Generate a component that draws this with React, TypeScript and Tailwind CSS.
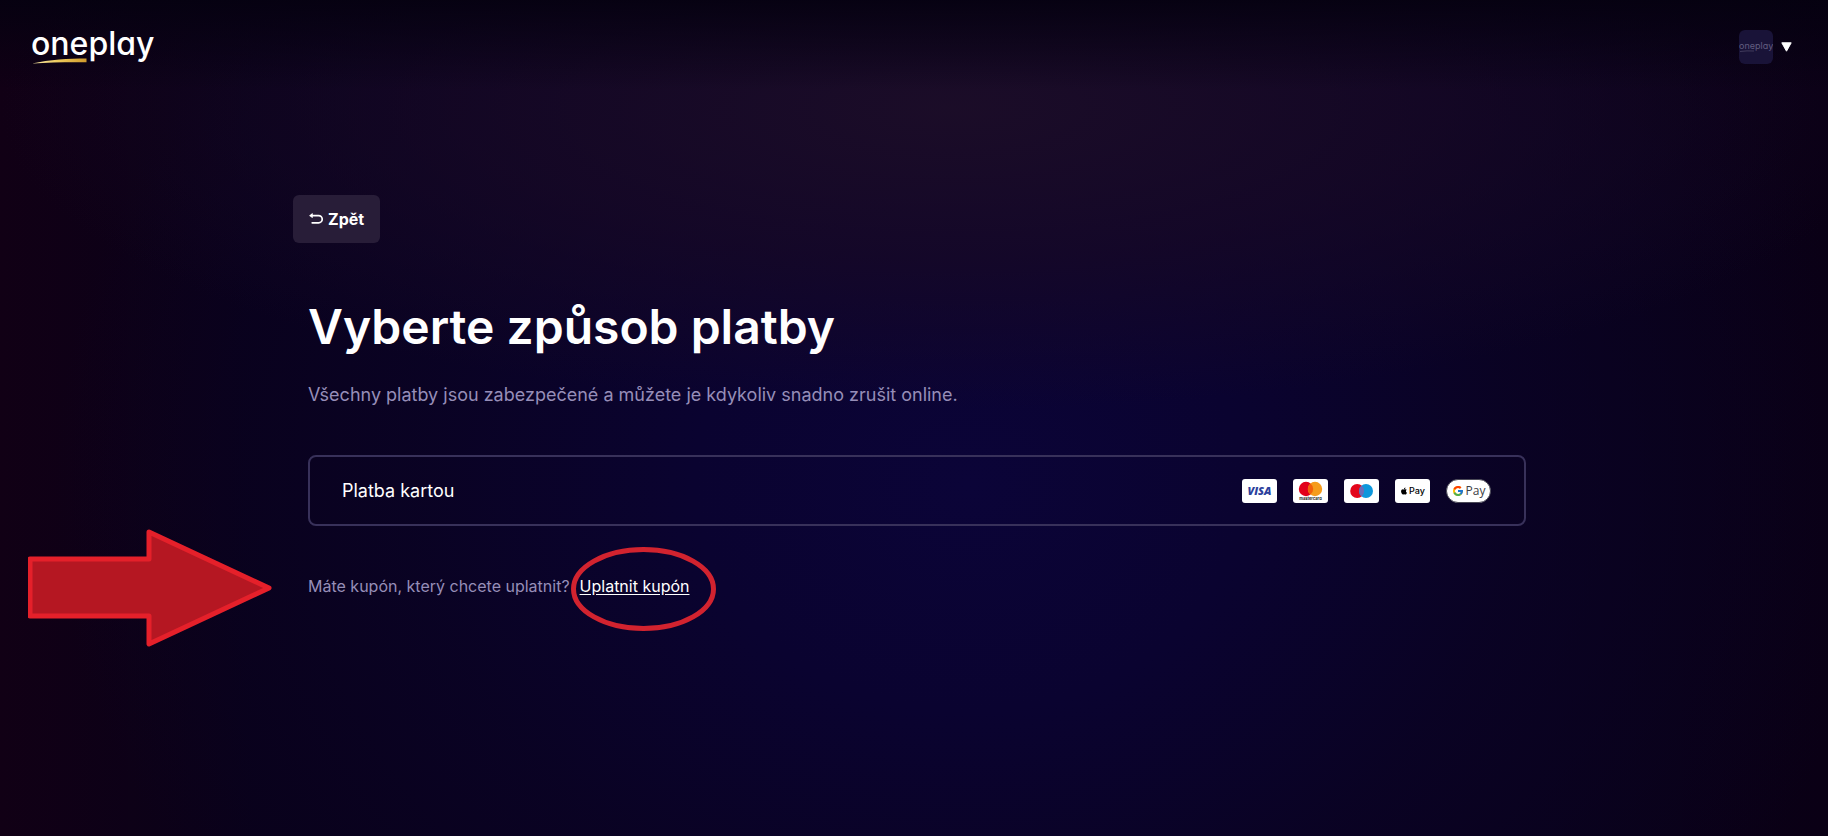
import React from "react";
import { FaApple } from "react-icons/fa";
import { FcGoogle } from "react-icons/fc";

function Logo() {
  return (
    <a href="#" aria-label="oneplay" className="block">
      <svg width="132" height="54" viewBox="0 -10 132 54" aria-hidden="true">
        <defs>
          <linearGradient id="swoosh" x1="0" x2="1" y1="0" y2="0">
            <stop offset="0" stopColor="#f8e9a8" />
            <stop offset="0.5" stopColor="#ecc95a" />
            <stop offset="1" stopColor="#d09a2c" />
          </linearGradient>
        </defs>
        <text
          x="-1"
          y="25"
          fill="#fff"
          fontSize="32"
          fontWeight="500"
          className="font-['Inter',sans-serif] [font-feature-settings:'cv11']"
        >
          oneplay
        </text>
        <path d="M0 33.6C18 29.6 36 28.6 54.5 28.6V32.2C36 32 18 32.2 0 33.6Z" fill="url(#swoosh)" />
      </svg>
    </a>
  );
}

function ProfileMenu() {
  return (
    <button type="button" aria-label="Profil" className="flex items-center gap-2">
      <span className="flex size-[34px] items-center justify-center overflow-hidden rounded-md bg-[#191338]">
        <svg width="34" height="34" viewBox="0 0 34 34" aria-hidden="true">
          <text
            x="0"
            y="19"
            fill="#625d80"
            fontSize="9"
            className="font-['Inter',sans-serif] [font-feature-settings:'cv11']"
          >
            oneplay
          </text>
          <path d="M1 21.5Q8 20.5 15 21" stroke="#524c6c" strokeWidth="0.7" fill="none" />
        </svg>
      </span>
      <svg width="11" height="10" viewBox="0 0 11 10" aria-hidden="true">
        <path d="M0.8 0.8H10.2L5.5 9.2Z" fill="#fff" stroke="#fff" strokeLinejoin="round" />
      </svg>
    </button>
  );
}

function BackIcon() {
  return (
    <svg width="14" height="14" viewBox="0 0 14 14" fill="none" stroke="#fff" strokeWidth="1.7" aria-hidden="true">
      <path d="M1.4 3.6H9.6A3.6 3.6 0 0 1 9.6 10.8H3.2" strokeLinecap="round" />
      <path d="M3.2 1.6L1.2 3.6L3.2 5.6Z" fill="#fff" strokeWidth="1" strokeLinejoin="round" />
    </svg>
  );
}

function Badge({ label, children }: { label: string; children: React.ReactNode }) {
  return (
    <li aria-label={label} className="flex h-6 w-[35px] items-center justify-center overflow-hidden rounded-[3px] bg-white">
      {children}
    </li>
  );
}

function PaymentBadges() {
  return (
    <ul className="flex items-center gap-4">
      <Badge label="Visa">
        <svg width="35" height="24" viewBox="0 0 35 24" aria-hidden="true">
          <text
            x="17.5"
            y="16"
            textAnchor="middle"
            fill="#2c3f9c"
            fontSize="11"
            fontWeight="800"
            fontStyle="italic"
            className="font-['Open_Sans',sans-serif]"
          >
            VISA
          </text>
        </svg>
      </Badge>
      <Badge label="Mastercard">
        <svg width="35" height="24" viewBox="0 0 35 24" aria-hidden="true">
          <circle cx="13" cy="10" r="7.2" fill="#e2001a" />
          <circle cx="22" cy="10" r="7.2" fill="#f59c1c" />
          <path d="M17.5 4.4A7.2 7.2 0 0 1 17.5 15.6A7.2 7.2 0 0 1 17.5 4.4Z" fill="#f2600c" />
          <text
            x="17.5"
            y="21"
            textAnchor="middle"
            fill="#222"
            fontSize="4"
            fontWeight="700"
            className="font-['Inter',sans-serif]"
          >
            mastercard
          </text>
        </svg>
      </Badge>
      <Badge label="Maestro">
        <svg width="35" height="24" viewBox="0 0 35 24" aria-hidden="true">
          <circle cx="13.2" cy="12" r="7" fill="#e3061b" />
          <circle cx="22" cy="12" r="7" fill="#0d97dc" />
          <path d="M17.6 6.6A7 7 0 0 1 17.6 17.4A7 7 0 0 1 17.6 6.6Z" fill="#6a6cb8" />
        </svg>
      </Badge>
      <Badge label="Apple Pay">
        <span className="flex items-center gap-px font-['Inter',sans-serif] text-[9px] leading-3 font-medium text-black">
          <FaApple size={8} aria-hidden="true" />
          Pay
        </span>
      </Badge>
      <li
        aria-label="Google Pay"
        className="flex h-6 w-[45px] items-center justify-center gap-[2px] rounded-full border border-[#4a4956] bg-white font-['Open_Sans',sans-serif] text-[12px] leading-4 text-[#3c4043]"
      >
        <FcGoogle size={12} aria-hidden="true" />
        Pay
      </li>
    </ul>
  );
}

function PointerArrow() {
  return (
    <svg
      className="pointer-events-none absolute -top-[45px] -left-[280px]"
      width="244"
      height="118"
      viewBox="0 0 244 118"
      aria-hidden="true"
    >
      <path
        d="M2 30H121V3L241 59L121 115V87H2Z"
        fill="#b51722"
        stroke="#e5202a"
        strokeWidth="5"
        strokeLinejoin="round"
      />
    </svg>
  );
}

function HighlightRing() {
  return (
    <svg
      className="pointer-events-none absolute -top-7 -left-[9px]"
      width="146"
      height="86"
      viewBox="0 0 146 86"
      aria-hidden="true"
    >
      <ellipse cx="72.5" cy="43" rx="70" ry="39.5" fill="none" stroke="#d2232f" strokeWidth="5" />
    </svg>
  );
}

export default function App() {
  return (
    <div className="min-h-screen overflow-hidden bg-[#090119] bg-[linear-gradient(to_bottom,rgba(5,1,16,0.9)_0,transparent_90px),radial-gradient(ellipse_52%_36%_at_52%_13%,rgba(28,13,40,0.95)_0,rgba(24,9,38,0.7)_50%,transparent_100%),radial-gradient(ellipse_50%_90%_at_53%_58%,#0b0438_0,#0a0330_30%,rgba(10,3,40,0.7)_60%,transparent_100%),linear-gradient(to_right,#110015_0,transparent_14%,transparent_84%,#0a0015_100%)] font-['Inter',sans-serif] text-white">
      <header className="flex h-[94px] items-center justify-between pr-9 pl-8">
        <Logo />
        <ProfileMenu />
      </header>

      <main className="pt-[101px] pl-1.5">
        <div className="mx-auto max-w-[1218px]">
          <button
            type="button"
            className="-ml-[15px] flex h-12 items-center gap-[5px] rounded-md bg-[#281d38] px-4 text-base font-bold"
          >
            <BackIcon />
            Zpět
          </button>

          <h1 className="mt-14 text-5xl leading-[56px] font-semibold">Vyberte způsob platby</h1>
          <p className="mt-6 text-lg leading-8 text-[#968eb8]">
            Všechny platby jsou zabezpečené a můžete je kdykoliv snadno zrušit online.
          </p>

          <button
            type="button"
            className="mt-11 flex h-[71px] w-full items-center justify-between rounded-lg border-2 border-[#38315a] pr-[33px] pl-8 text-left text-lg"
          >
            Platba kartou
            <PaymentBadges />
          </button>

          <div className="relative mt-12 flex items-center gap-2.5 text-base leading-6 text-[#968eb8]">
            <PointerArrow />
            <p>Máte kupón, který chcete uplatnit?</p>
            <span className="relative">
              <a href="#" className="text-white underline underline-offset-2">
                Uplatnit kupón
              </a>
              <HighlightRing />
            </span>
          </div>
        </div>
      </main>
    </div>
  );
}
